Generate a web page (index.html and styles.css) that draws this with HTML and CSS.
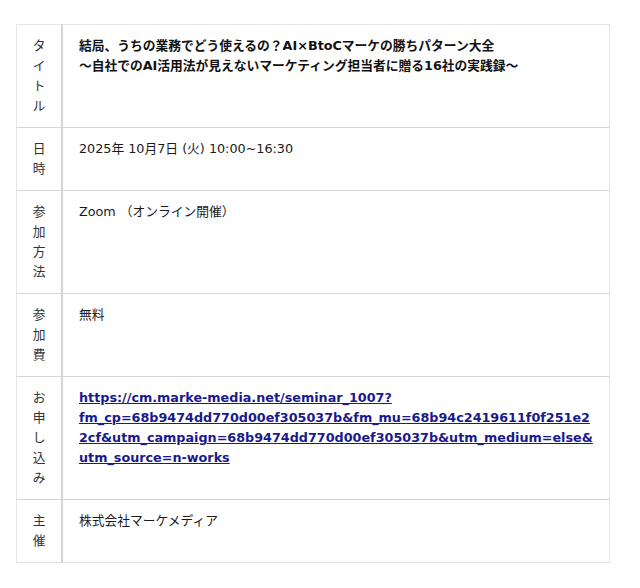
FILE: index.html
```html
<!DOCTYPE html>
<html lang="ja">
<head>
<meta charset="utf-8">
<link rel="stylesheet" href="styles.css">
</head>
<body>
<table class="info">
  <tr>
    <th class="label">タイトル</th>
    <td class="value title">結局、うちの業務でどう使えるの？AI×BtoCマーケの勝ちパターン大全<br>～自社でのAI活用法が見えないマーケティング担当者に贈る16社の実践録～</td>
  </tr>
  <tr>
    <th class="label">日時</th>
    <td class="value">2025年 10月7日 (火) 10:00~16:30</td>
  </tr>
  <tr>
    <th class="label">参加方法</th>
    <td class="value">Zoom （オンライン開催）</td>
  </tr>
  <tr>
    <th class="label">参加費</th>
    <td class="value">無料</td>
  </tr>
  <tr>
    <th class="label">お申し込み</th>
    <td class="value"><a class="link" href="#">https://cm.marke-media.net/seminar_1007?<wbr>fm_cp=68b9474dd770d00ef305037b&amp;fm_mu=68b94c2419611f0f251e22cf&amp;utm_campaign=68b9474dd770d00ef305037b&amp;utm_medium=else&amp;utm_source=n-works</a></td>
  </tr>
  <tr>
    <th class="label">主催</th>
    <td class="value">株式会社マーケメディア</td>
  </tr>
</table>
</body>
</html>
```

FILE: styles.css
```css
html, body {
  margin: 0;
  padding: 0;
  background: #ffffff;
}
body {
  padding: 24px 0 0 16px;
  font-family: "DejaVu Sans", "Noto Sans CJK JP", sans-serif;
  font-size: 12.75px;
  line-height: 20px;
  color: #1a1a1a;
}
.info {
  width: 594px;
  border-collapse: collapse;
  border: 1px solid #e6e6e6;
}
.info tr {
  border-bottom: 1px solid #d6d6d6;
}
.info tr:last-child {
  border-bottom: 1px solid #e2e2e2;
}
.label {
  width: 14px;
  padding: 11px 15px;
  font-weight: normal;
  color: #333333;
  text-align: center;
  vertical-align: top;
  word-break: break-all;
  border-right: 2px solid #d4d4d4;
}
.value {
  padding: 11px 12px 11px 16px;
  vertical-align: top;
  text-align: left;
}
.title {
  font-weight: bold;
  color: #111111;
}
.link {
  color: #1a1a8c;
  font-weight: bold;
  text-decoration: underline;
  overflow-wrap: anywhere;
}
```
